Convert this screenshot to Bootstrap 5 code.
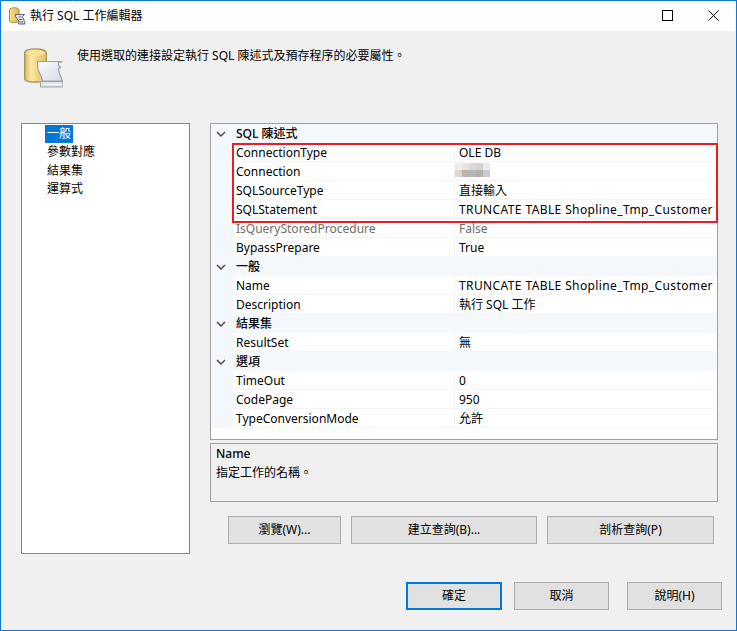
<!DOCTYPE html>
<html lang="zh-Hant">
<head>
<meta charset="utf-8">
<title>執行 SQL 工作編輯器</title>
<link href="https://cdn.jsdelivr.net/npm/bootstrap@5.3.0/dist/css/bootstrap.min.css" rel="stylesheet">
<style>
html,body{margin:0;height:631px;overflow:hidden;background:#f0f0f0}
body{font-family:"Noto Sans","Noto Sans CJK TC",sans-serif;font-size:12px;line-height:19px;color:#000}
.dlg{width:737px;height:631px;border:1px solid #0a7ad6;background:#f0f0f0}
.titlebar{height:30px;background:#fff;padding-left:8px;flex:none}
.titlebar .ttl{margin-left:4px;margin-bottom:1px}
.winbtns{margin-left:auto}
.winbtn{width:46px;height:30px;padding-bottom:2px}
.intro{height:92px;padding:17px 0 0 23px;flex:none}
.intro-text{margin-left:14px;margin-top:-2px}
.mainrow{padding-left:20px;flex:none}
.navlist{width:169px;height:431px;border:1px solid #828790;background:#fff;padding:1px 0 0 23px;line-height:18.5px;margin-right:20px}
.navitem{padding:0 2px;width:fit-content}
.navitem.sel{background:#0078d7;color:#fff;height:18px}
.rightcol{width:508px}
.pgrid{position:relative;height:317px;border:1px solid #a0a0a0;background:#fff}
.pgroup{height:19px;background:#f4f7fc;display:flex;align-items:center}
.pgroup .twist{width:25px;padding-left:5px;display:flex;flex:none}
.pgroup b{font-weight:500}
.prow{height:19px;display:flex;background:#f4f7fc}
.pname{margin-left:22px;width:222px;padding-left:3px;background:#fff;border-bottom:1px solid #f5f5f8;border-right:1px solid #f5f5f8;white-space:nowrap;line-height:20px;overflow:hidden}
.pval{flex:1;padding-left:4px;background:#fff;border-bottom:1px solid #f5f5f8;white-space:nowrap;line-height:20px;overflow:hidden}
.pval.blurred{padding-left:0}
.caps{letter-spacing:.39px}
.readonly{color:#6d6d6d}
.fill{height:11px;background:#fff}
.redbox{position:absolute;left:21px;top:19px;width:486px;height:80px;border:2px solid #ed1c24;pointer-events:none}
.descbox{height:59px;margin-top:3px;border:1px solid #a0a0a0;padding:0 5px;line-height:18px}
.descbox b{font-weight:500;display:block;line-height:19px}
.descbox span{display:block;margin-top:1px}
.winbutton{background:#e1e1e1;border:1px solid #adadad;border-radius:0;height:28px;font-size:12px;line-height:16px;color:#000;padding:0;display:flex;align-items:center;justify-content:center;font-family:inherit}
.querybar{margin:14px 0 0 18px;gap:10px}
.b1{width:113px}.b2{width:186px}.b3{width:167px}
.actionbar{padding-left:405px;height:28px}
.actionbar .winbutton{width:95px}
.actionbar .winbutton.dflt{width:96px;border:2px solid #0078d7;margin-right:12px}
.actionbar .winbutton.helpb{margin-left:18px}
.actionwrap{margin-top:28px}
</style>
</head>
<body>
<div class="dlg d-flex flex-column">
  <div class="titlebar d-flex align-items-center">
    <svg width="17" height="18" viewBox="0 0 17 18"><defs><linearGradient id="g0" x1="0" x2="1" y1="0" y2="0"><stop offset="0" stop-color="#f8e08a"/><stop offset="1" stop-color="#e3b552"/></linearGradient></defs>
      <path d="M0.5 3c0-3 9.500-3 9.500 0v11c0 2-9.500 2-9.500 0z" fill="url(#g0)" stroke="#a98a4b"/>
      <path d="M6.500 7.500h9l-2 2 2 5 .5 2.500H9.500l.5-2.500-3.500-5z" fill="#dfe3ea" stroke="#5f6673"/>
      <path d="M9.500 10h3M10 12.500h3.500M10.500 15h4" stroke="#666c78" stroke-width=".9"/>
    </svg>
    <span class="ttl">執行 SQL 工作編輯器</span>
    <div class="winbtns d-flex">
      <div class="winbtn d-flex align-items-center justify-content-center"><svg width="11" height="11" viewBox="0 0 11 11"><rect x=".5" y=".5" width="10" height="10" fill="none" stroke="#000"/></svg></div>
      <div class="winbtn d-flex align-items-center justify-content-center"><svg width="11" height="11" viewBox="0 0 11 11"><path d="M.5.5l10 10M10.500.5l-10 10" fill="none" stroke="#000"/></svg></div>
    </div>
  </div>
  <div class="intro d-flex">
    <svg width="39" height="41" viewBox="0 0 39 41" class="flex-shrink-0"><defs><linearGradient id="g1" x1="0" x2="1" y1="0" y2="0"><stop offset="0" stop-color="#d9b96a"/><stop offset=".3" stop-color="#fbe9a0"/><stop offset="1" stop-color="#e2bd62"/></linearGradient><linearGradient id="g2" x1="0" x2="1" y1="0" y2="1"><stop offset="0" stop-color="#fbfcfe"/><stop offset="1" stop-color="#d5dae4"/></linearGradient></defs>
      <path d="M.7 5C.7-.5 22.300-.5 22.300 5v26c0 4-21.600 4-21.600 0z" fill="url(#g1)" stroke="#a98f60" stroke-width="1.300"/>
      <ellipse cx="11.500" cy="5" rx="9.500" ry="3" fill="#f7e09a"/>
      <path d="M13.500 13.500h25l-4 1v3l2 2-2 1 1 5 3 7.500H18.500c-.5-4-2.500-7-4-10-.8-2-1-6-1-10z" fill="url(#g2)" stroke="#9aa1ad" stroke-width="1.200"/>
      <path d="M16.500 33.500h22.500v5.500H16.500z" fill="#dfe3ea" stroke="#9aa1ad"/>
      <path d="M19 36.500h18" stroke="#f6f7fa"/>
    </svg>
    <div class="intro-text">使用選取的連接設定執行 SQL 陳述式及預存程序的必要屬性。</div>
  </div>
  <div class="mainrow d-flex">
    <div class="navlist">
      <div class="navitem sel">一般</div>
      <div class="navitem">參數對應</div>
      <div class="navitem">結果集</div>
      <div class="navitem">運算式</div>
    </div>
    <div class="rightcol">
      <div class="pgrid">
        <div class="pgroup"><span class="twist"><svg width="10" height="6" viewBox="0 0 10 6"><path d="M1 1l4 4 4-4" fill="none" stroke="#444" stroke-width="1.400"/></svg></span><b>SQL 陳述式</b></div>
        <div class="prow"><div class="pname">ConnectionType</div><div class="pval">OLE DB</div></div>
        <div class="prow"><div class="pname">Connection</div><div class="pval blurred"><svg width="35" height="15" viewBox="0 0 35 15" class="d-block"><g shape-rendering="crispEdges"><rect x="0" y="1" width="7" height="7" fill="#eeecea"/><rect x="7" y="1" width="7" height="7" fill="#e6e3e0"/><rect x="14" y="1" width="7" height="7" fill="#d6d8dc"/><rect x="21" y="1" width="7" height="7" fill="#d2d2d4"/><rect x="28" y="1" width="7" height="7" fill="#ebebee"/><rect x="0" y="8" width="7" height="7" fill="#d9d6d1"/><rect x="7" y="8" width="7" height="7" fill="#bcb2a8"/><rect x="14" y="8" width="7" height="7" fill="#aeb6c0"/><rect x="21" y="8" width="7" height="7" fill="#b5afa8"/><rect x="28" y="8" width="7" height="7" fill="#c8cad2"/></g></svg></div></div>
        <div class="prow"><div class="pname">SQLSourceType</div><div class="pval">直接輸入</div></div>
        <div class="prow"><div class="pname">SQLStatement</div><div class="pval caps">TRUNCATE TABLE Shopline_Tmp_Customer</div></div>
        <div class="prow"><div class="pname readonly">IsQueryStoredProcedure</div><div class="pval readonly">False</div></div>
        <div class="prow"><div class="pname">BypassPrepare</div><div class="pval">True</div></div>
        <div class="pgroup"><span class="twist"><svg width="10" height="6" viewBox="0 0 10 6"><path d="M1 1l4 4 4-4" fill="none" stroke="#444" stroke-width="1.400"/></svg></span><b>一般</b></div>
        <div class="prow"><div class="pname">Name</div><div class="pval caps">TRUNCATE TABLE Shopline_Tmp_Customer</div></div>
        <div class="prow"><div class="pname">Description</div><div class="pval">執行 SQL 工作</div></div>
        <div class="pgroup"><span class="twist"><svg width="10" height="6" viewBox="0 0 10 6"><path d="M1 1l4 4 4-4" fill="none" stroke="#444" stroke-width="1.400"/></svg></span><b>結果集</b></div>
        <div class="prow"><div class="pname">ResultSet</div><div class="pval">無</div></div>
        <div class="pgroup"><span class="twist"><svg width="10" height="6" viewBox="0 0 10 6"><path d="M1 1l4 4 4-4" fill="none" stroke="#444" stroke-width="1.400"/></svg></span><b>選項</b></div>
        <div class="prow"><div class="pname">TimeOut</div><div class="pval">0</div></div>
        <div class="prow"><div class="pname">CodePage</div><div class="pval">950</div></div>
        <div class="prow"><div class="pname">TypeConversionMode</div><div class="pval">允許</div></div>
        <div class="fill"></div>
        <div class="redbox"></div>
      </div>
      <div class="descbox"><b>Name</b><span>指定工作的名稱。</span></div>
      <div class="querybar d-flex">
        <button class="winbutton btn b1">瀏覽(W)...</button>
        <button class="winbutton btn b2">建立查詢(B)...</button>
        <button class="winbutton btn b3">剖析查詢(P)</button>
      </div>
    </div>
  </div>
  <div class="actionwrap">
    <div class="actionbar d-flex">
      <button class="winbutton btn dflt">確定</button>
      <button class="winbutton btn">取消</button>
      <button class="winbutton btn helpb">說明(H)</button>
    </div>
  </div>
</div>
<script src="https://cdn.jsdelivr.net/npm/bootstrap@5.3.0/dist/js/bootstrap.bundle.min.js"></script>
</body>
</html>
